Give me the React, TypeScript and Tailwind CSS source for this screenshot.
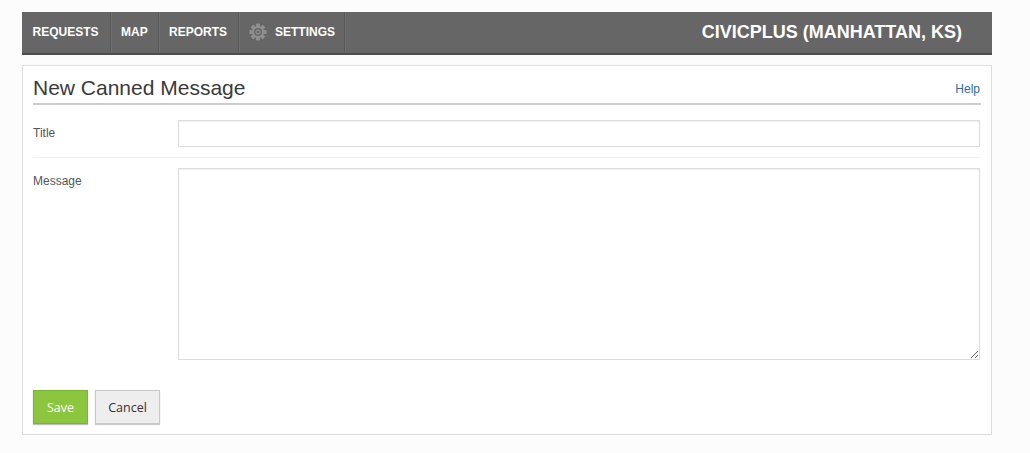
import React from "react";

function Gear() {
  return (
    <svg width="18" height="18" viewBox="0 0 18 18" className="block" aria-hidden="true">
      <g fill="#8f8f8f">
        <rect x="7" y="0.5" width="4" height="17" rx="0.6" />
        <rect x="7" y="0.5" width="4" height="17" rx="0.6" transform="rotate(45 9 9)" />
        <rect x="7" y="0.5" width="4" height="17" rx="0.6" transform="rotate(90 9 9)" />
        <rect x="7" y="0.5" width="4" height="17" rx="0.6" transform="rotate(135 9 9)" />
      </g>
      <circle cx="9" cy="9" r="6" fill="#8f8f8f" />
      <circle cx="9" cy="9" r="4" fill="#666666" />
      <circle cx="9" cy="9" r="2.6" fill="#8f8f8f" />
      <circle cx="9" cy="9" r="1.3" fill="#666666" />
    </svg>
  );
}

function NavItem({ children, className = "" }: { children: React.ReactNode; className?: string }) {
  return (
    <a className={`flex h-full items-center gap-[8px] border-r border-[#585858] shadow-[1px_0_0_#707070] text-[12px] font-bold text-white ${className}`}>
      {children}
    </a>
  );
}

export default function App() {
  return (
    <div className="min-h-[453px] bg-[#fcfcfc] px-[22px] pt-3 font-['Liberation_Sans',Arial,sans-serif]">
      <nav className="flex h-[43px] w-[970px] items-stretch justify-between border-b-2 border-[#4d4d4d] bg-[#666666]">
        <div className="flex h-[40px] items-center">
          <NavItem className="w-[89px] pl-[10.5px]">REQUESTS</NavItem>
          <NavItem className="w-[48px] pl-[10px]">MAP</NavItem>
          <NavItem className="w-[80px] pl-[10px]">REPORTS</NavItem>
          <NavItem className="w-[106px] pl-[10px]">
            <Gear />
            SETTINGS
          </NavItem>
        </div>
        <div className="flex h-[40px] items-center pr-[30px] text-[18px] font-bold text-white">
          CIVICPLUS (MANHATTAN, KS)
        </div>
      </nav>

      <main className="mt-[10px] h-[370px] w-[970px] border border-[#dddddd] bg-white px-[10px]">
        <header className="mt-[7px] flex h-[32px] items-end justify-between border-b-2 border-[#cccccc] pb-[2px]">
          <h1 className="text-[21px] leading-[26px] font-normal text-[#3a3a3a]">New Canned Message</h1>
          <a className="mr-[1px] mb-[4px] text-[12px] leading-[16px] text-[#2d6ca8]">Help</a>
        </header>

        <div className="flex h-[53px] items-start border-b border-[#f2f2f2] pt-[15px]">
          <label className="mt-[6px] w-[145px] text-[12px] leading-[14px] text-[#555555]">Title</label>
          <input
            type="text"
            className="h-[27px] w-[802px] border border-[#dcdcdc] bg-white shadow-[inset_0_1px_1px_#f0f0f0] outline-none"
          />
        </div>

        <div className="flex items-start pt-[10px]">
          <label className="mt-[6px] w-[145px] text-[12px] leading-[14px] text-[#555555]">Message</label>
          <textarea className="block h-[192px] w-[802px] border border-[#dcdcdc] bg-white shadow-[inset_0_1px_1px_#f0f0f0] outline-none" />
        </div>

        <div className="mt-[30px] flex gap-[7px]">
          <button className="h-[34px] w-[55px] border border-[#7ab532] bg-[#8cc63f] pt-[2px] text-[12.5px] text-white shadow-[0_1px_1px_rgba(0,0,0,0.25)] font-['Open_Sans',sans-serif]">
            Save
          </button>
          <button className="h-[34px] w-[65px] border border-[#c8c8c8] bg-[#eeeeee] pt-[2px] text-[12.5px] text-[#333333] shadow-[0_1px_1px_rgba(0,0,0,0.2)] font-['Open_Sans',sans-serif]">
            Cancel
          </button>
        </div>
      </main>
    </div>
  );
}
